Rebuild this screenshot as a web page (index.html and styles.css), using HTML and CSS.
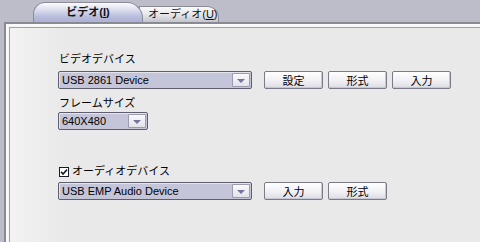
FILE: index.html
```html
<!DOCTYPE html>
<html lang="ja">
<head>
  <meta charset="UTF-8">
  <title>キャプチャ設定</title>
  <link rel="stylesheet" href="styles.css">
</head>
<body>
  <div class="tab-strip">
    <div class="tab active">ビデオ(<u>I</u>)</div>
    <div class="tab">オーディオ(<u>U</u>)</div>
  </div>

  <div class="panel">
    <!-- video device -->
    <div class="label">ビデオデバイス</div>
    <div class="row">
      <div class="combo wide">
        <span class="combo-text">USB 2861 Device</span>
        <span class="combo-btn"><span class="arrow"></span></span>
      </div>
      <button class="btn">設定</button>
      <button class="btn">形式</button>
      <button class="btn">入力</button>
    </div>

    <div class="label frame">フレームサイズ</div>
    <div class="row">
      <div class="combo narrow">
        <span class="combo-text">640X480</span>
        <span class="combo-btn"><span class="arrow"></span></span>
      </div>
    </div>

    <!-- audio device -->
    <div class="label check">
      <svg class="checkbox" width="10" height="10" viewBox="0 0 10 10">
        <rect x="0.5" y="0.5" width="9" height="9" fill="#fff" stroke="#1c1c28"/>
        <path d="M2 4.8 L4 7 L8 2.6" fill="none" stroke="#1c1c28" stroke-width="1.6"/>
      </svg>
      オーディオデバイス
    </div>
    <div class="row">
      <div class="combo wide">
        <span class="combo-text">USB EMP Audio Device</span>
        <span class="combo-btn"><span class="arrow"></span></span>
      </div>
      <button class="btn">入力</button>
      <button class="btn">形式</button>
    </div>
  </div>
</body>
</html>
```

FILE: styles.css
```css
html, body {
  height: 100%;
}

body {
  margin: 0;
  background: #bdbdc9;
  font-family: "Liberation Sans", "Noto Sans CJK JP", sans-serif;
  font-size: 11px;
  color: #000;
  display: flex;
  flex-direction: column;
  overflow: hidden;
}

.tab-strip {
  height: 22px;
  display: flex;
  align-items: flex-end;
  padding-left: 33px;
  flex-shrink: 0;
}

.tab {
  position: relative;
  box-sizing: border-box;
  height: 16px;
  line-height: 15px;
  width: 80px;
  margin-left: -4px;
  padding-left: 8px;
  border: 1px solid #8c8c98;
  border-bottom: none;
  border-radius: 0 12px 0 0;
  background: linear-gradient(#fbfbfb, #e6e6ea 50%, #c4c4cc);
  color: #111;
  z-index: 0;
}

.tab.active {
  height: 20px;
  line-height: 19px;
  width: 110px;
  margin-left: 0;
  padding-left: 0;
  text-align: center;
  font-weight: bold;
  border-radius: 12px 16px 0 0;
  background: linear-gradient(#fbfbfe, #dcdeee 35%, #b6badb 75%, #aeb2d4);
  z-index: 1;
}

.panel {
  flex: 1;
  margin-left: 4px;
  border-top: 2px solid #8a8a92;
  border-left: 2px solid #8a8a92;
  box-shadow: inset 2px 2px 0 #fafafa, inset 3px 3px 0 #f4f4f4, inset 4px 4px 0 #a4a4a8;
  background: linear-gradient(to right, #f3f3f3, #e9e9e9 60px);
  padding: 29px 0 0 52px;
}

.label {
  height: 13px;
  line-height: 13px;
  margin-bottom: 5px;
  padding-left: 1px;
}

.label.frame {
  margin-top: 8px;
  margin-bottom: 2px;
}

.label.check {
  margin-top: 35px;
  margin-bottom: 4px;
  display: flex;
  align-items: center;
  gap: 3px;
}

.checkbox {
  display: block;
}

.row {
  display: flex;
  align-items: center;
  gap: 5px;
}

.combo {
  box-sizing: border-box;
  height: 18px;
  display: flex;
  align-items: stretch;
  border: 1px solid #5e5e6c;
  border-radius: 2px;
  background: #c5c5d9;
  box-shadow: inset 1px 1px 0 #e4e4ee;
}

.combo.wide {
  width: 194px;
  margin-right: 7px;
}

.combo.narrow {
  width: 90px;
}

.combo-text {
  flex: 1;
  line-height: 16px;
  padding-left: 3px;
  white-space: nowrap;
}

.combo-btn {
  width: 16px;
  margin: 1px;
  border: 1px solid #9c9cb0;
  border-radius: 1px;
  background: linear-gradient(#fafafc, #e2e2ea);
  display: flex;
  align-items: center;
  justify-content: center;
}

.arrow {
  width: 0;
  height: 0;
  border-left: 4px solid transparent;
  border-right: 4px solid transparent;
  border-top: 4px solid #7474a0;
  margin-top: 1px;
}

.btn {
  box-sizing: border-box;
  width: 59px;
  height: 18px;
  padding: 0;
  border: 1px solid #7a7a88;
  border-radius: 2px;
  background: linear-gradient(#ffffff, #f2f2f6 50%, #dcdce4);
  box-shadow: inset -1px -1px 0 #c8c8d4;
  font-family: "Noto Sans CJK JP", sans-serif;
  font-size: 11px;
  line-height: 16px;
  color: #000;
}
```
